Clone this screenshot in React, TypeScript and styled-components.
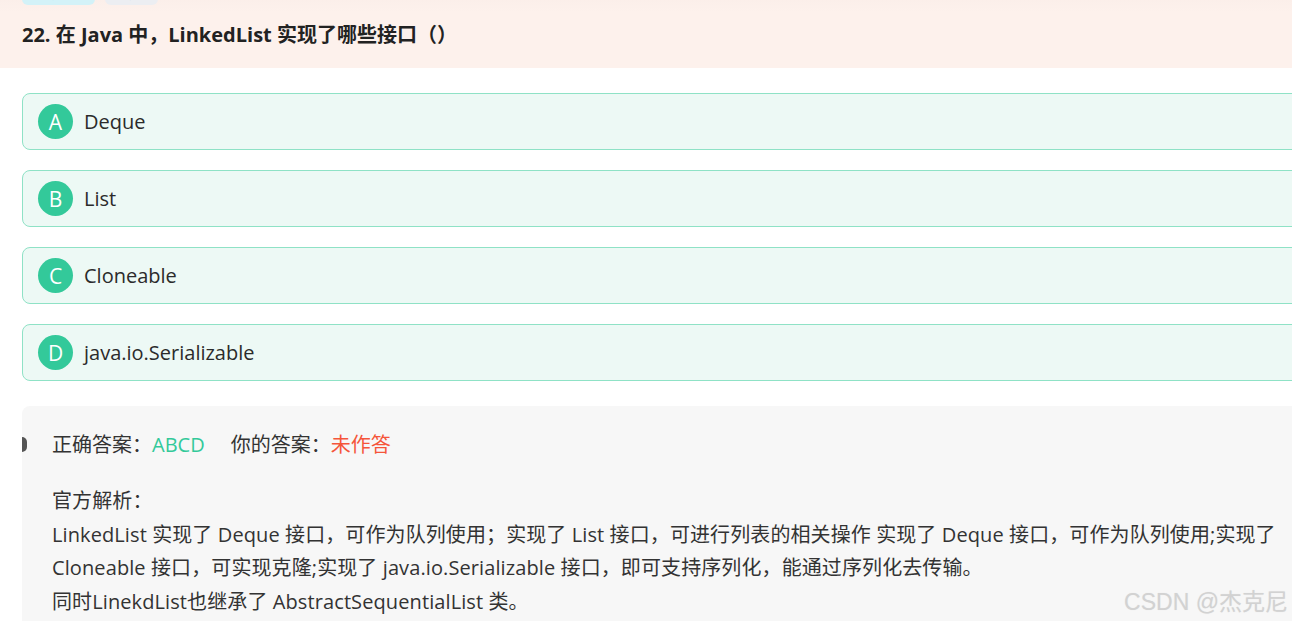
import React from "react";
import styled, { createGlobalStyle } from "styled-components";

const Global = createGlobalStyle`
  html, body { margin: 0; padding: 0; background: #fff; overflow: hidden; }
  body { font-family: "Open Sans", "Noto Sans CJK SC", sans-serif; color: #333; }
`;

const Page = styled.div`
  width: 1320px;
  height: 621px;
  overflow: hidden;
  position: relative;
`;

const Header = styled.header`
  background: linear-gradient(#f8ebe6 0px, #fdf1ec 33px, #fdf1ec 100%);
  margin-top: -21px;
  padding: 0 22px;
  height: 89px;
  box-sizing: border-box;
  display: flex;
  flex-direction: column;
`;

const Tags = styled.div`
  display: flex;
  gap: 10px;
  height: 26px;
`;

const Tag = styled.span<{ $kind: "type" | "plain" }>`
  display: inline-flex;
  align-items: center;
  justify-content: center;
  width: ${(p) => (p.$kind === "type" ? "73px" : "53px")};
  height: 26px;
  border-radius: 6px;
  font-size: 14px;
  font-family: "Noto Sans CJK SC", sans-serif;
  background: ${(p) => (p.$kind === "type" ? "#d3f2f8" : "#eceef2")};
  color: ${(p) => (p.$kind === "type" ? "#16a6c9" : "#888")};
`;

const Title = styled.h2`
  margin: 16px 0 0;
  font-size: 20px;
  line-height: 28px;
  font-weight: 700;
  color: #222;
  font-family: "Open Sans", "Noto Sans CJK SC", sans-serif;
`;

const Options = styled.div`
  display: flex;
  flex-direction: column;
  gap: 20px;
  padding: 25px 0 0 22px;
`;

const Option = styled.div`
  box-sizing: border-box;
  height: 57px;
  border: 1px solid #8fe2c6;
  background: #edf9f5;
  border-radius: 8px;
  display: flex;
  align-items: center;
  padding-left: 15px;
  gap: 11px;
`;

const Letter = styled.span`
  width: 35px;
  height: 35px;
  border-radius: 50%;
  background: #33c99a;
  color: #fff;
  display: flex;
  align-items: center;
  justify-content: center;
  font-size: 21px;
`;

const OptionText = styled.span`
  font-size: 20px;
  color: #2b2b2b;
`;

const Analysis = styled.section`
  position: relative;
  margin: 25px 0 0 22px;
  background: #f7f7f7;
  border-radius: 8px 0 0 0;
  padding: 22px 0 0 30px;
  height: 300px;
  font-size: 20px;
  color: #333;
  font-family: "Open Sans", "Noto Sans CJK SC", sans-serif;
`;

const Marker = styled.span`
  position: absolute;
  left: 0;
  top: 31px;
  width: 5px;
  height: 15px;
  background: #555;
  border-radius: 0 8px 8px 0;
`;

const AnswerRow = styled.div`
  display: flex;
  line-height: 33px;
  margin-bottom: 23px;
`;

const Answer = styled.span<{ $tone: "ok" | "none" }>`
  color: ${(p) => (p.$tone === "ok" ? "#33c99a" : "#f5553a")};
  margin-right: ${(p) => (p.$tone === "ok" ? "26px" : "0")};
`;

const Para = styled.div`
  line-height: 33.5px;
  white-space: nowrap;
  letter-spacing: 0.1px;
`;

const Watermark = styled.div`
  position: absolute;
  right: 32px;
  top: 583px;
  font-size: 23px;
  color: #d2d2d2;
  text-shadow: 0 0 1px #e6e6e6;
  font-family: "Liberation Sans", "Noto Sans CJK SC", sans-serif;
`;

const options = [
  ["A", "Deque"],
  ["B", "List"],
  ["C", "Cloneable"],
  ["D", "java.io.Serializable"],
];

export default function App() {
  return (
    <Page>
      <Global />
      <Header>
        <Tags>
          <Tag $kind="type">多选题</Tag>
          <Tag $kind="plain">2分</Tag>
        </Tags>
        <Title>22. 在 Java 中，LinkedList 实现了哪些接口（）</Title>
      </Header>
      <Options>
        {options.map(([l, t]) => (
          <Option key={l}>
            <Letter>{l}</Letter>
            <OptionText>{t}</OptionText>
          </Option>
        ))}
      </Options>
      <Analysis>
        <Marker />
        <AnswerRow>
          <span>正确答案：</span>
          <Answer $tone="ok">ABCD</Answer>
          <span>你的答案：</span>
          <Answer $tone="none">未作答</Answer>
        </AnswerRow>
        <Para>官方解析：</Para>
        <Para>
          LinkedList 实现了 Deque 接口，可作为队列使用；实现了 List 接口，可进行列表的相关操作 实现了 Deque 接口，可作为队列使用;实现了
          <br />
          Cloneable 接口，可实现克隆;实现了 java.io.Serializable 接口，即可支持序列化，能通过序列化去传输。
        </Para>
        <Para>同时LinekdList也继承了 AbstractSequentialList 类。</Para>
      </Analysis>
      <Watermark>CSDN @杰克尼</Watermark>
    </Page>
  );
}
